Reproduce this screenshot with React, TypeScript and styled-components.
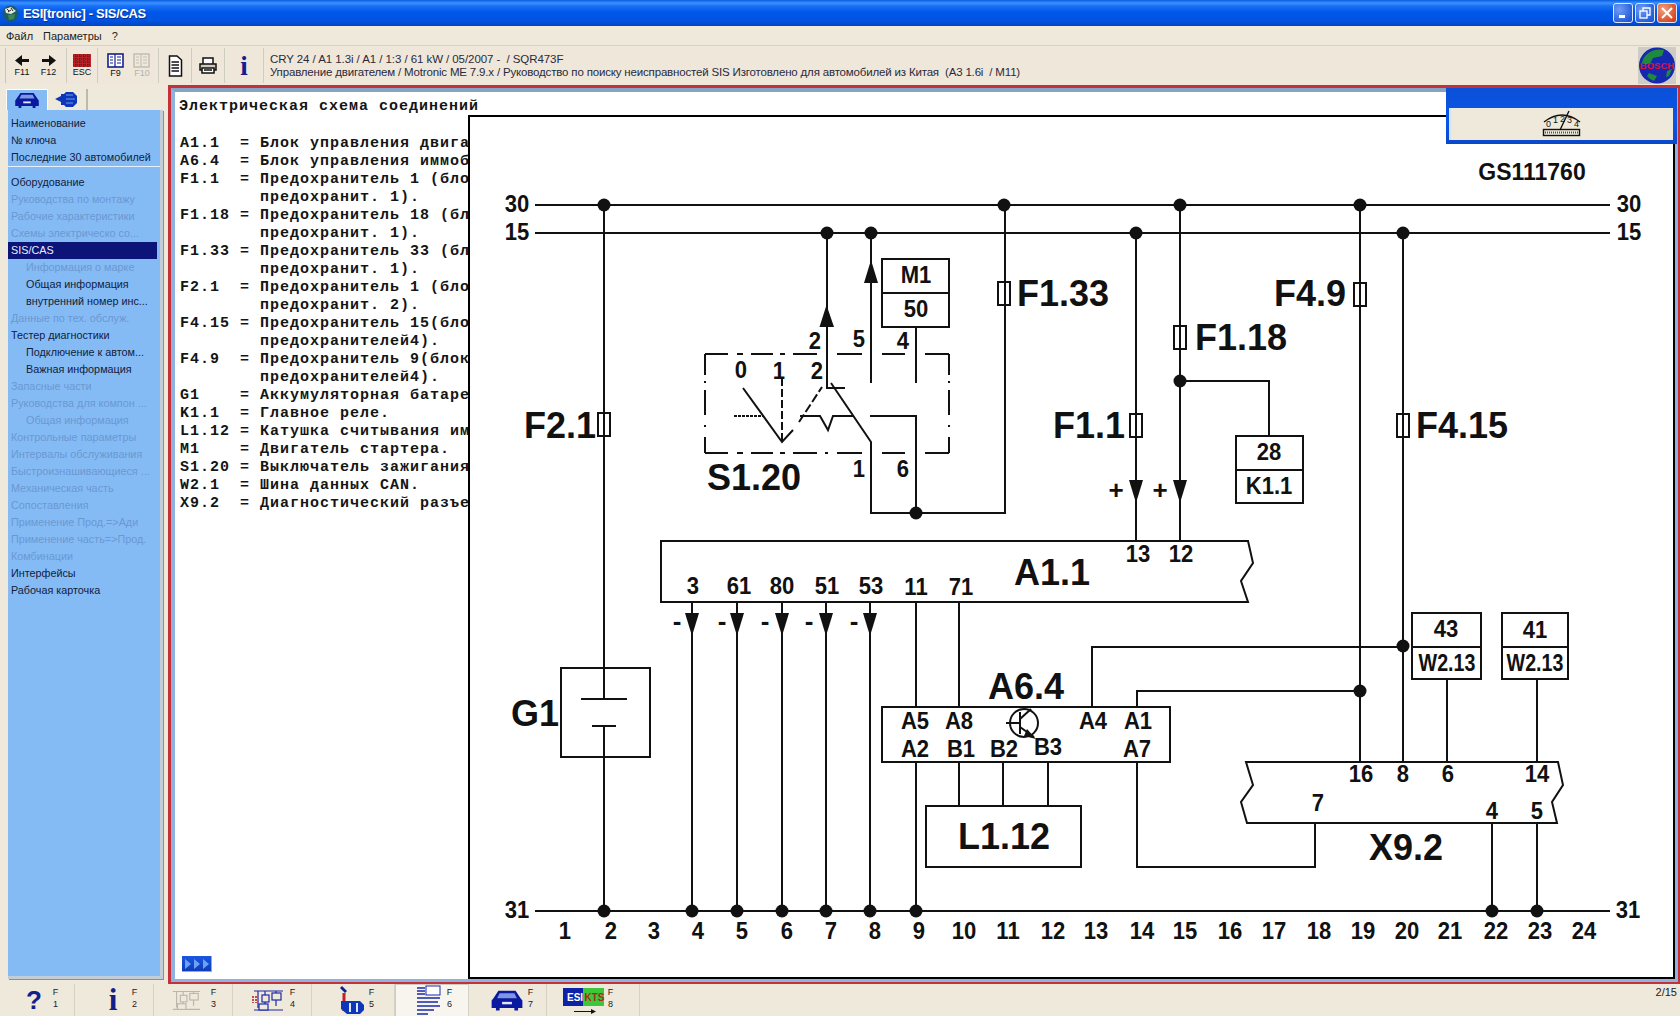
import React from 'react';
import styled, { createGlobalStyle } from 'styled-components';

const Global = createGlobalStyle`
  html, body { margin: 0; padding: 0; background: #efe9db; }
  * { box-sizing: border-box; }
`;

const Page = styled.div`
  position: relative;
  width: 1680px;
  height: 1016px;
  display: flex;
  flex-direction: column;
  overflow: hidden;
  background: #efe9db;
  font-family: "Liberation Sans", Arial, sans-serif;
  color: #14142c;
`;

/* ---------- title bar ---------- */
const TitleBar = styled.div`
  height: 26px;
  flex: none;
  display: flex;
  align-items: center;
  padding: 0 3px 0 2px;
  background: linear-gradient(180deg, #0b5ce0 0, #3a93ff 3px, #1a70f5 6px, #0058e8 12px, #0054e3 20px, #0048c8 25px, #0a3fb0 26px);
`;
const AppIcon = styled.svg`
  width: 17px;
  height: 17px;
  flex: none;
`;
const TitleText = styled.span`
  margin-left: 4px;
  font-size: 13px;
  font-weight: bold;
  letter-spacing: -0.3px;
  color: #fff;
  text-shadow: 1px 1px 0 #0a2f90;
`;
const WinButtons = styled.div`
  margin-left: auto;
  display: flex;
  gap: 2px;
`;
const WinButton = styled.div<{ $close?: boolean }>`
  width: 20px;
  height: 20px;
  border: 1px solid #dfe8fb;
  border-radius: 3px;
  display: flex;
  align-items: center;
  justify-content: center;
  background: ${(p) =>
    p.$close
      ? 'radial-gradient(circle at 30% 30%, #f0a080, #d8502c 70%, #c03a1a)'
      : 'radial-gradient(circle at 30% 30%, #6f9cf5, #2a62dc 70%, #1c4cc4)'};
`;

/* ---------- menu ---------- */
const MenuBar = styled.div`
  height: 20px;
  flex: none;
  display: flex;
  align-items: center;
  padding-left: 6px;
  gap: 10px;
  font-size: 11px;
  background: #efe9db;
  border-bottom: 1px solid #d3d3c4;
  box-shadow: 0 1px 0 #fbfaf5;
`;
const MenuItem = styled.span`
  color: #222;
`;

/* ---------- tool bar ---------- */
const ToolBar = styled.div`
  height: 39px;
  flex: none;
  display: flex;
  align-items: stretch;
  padding: 2px 4px 2px 5px;
  background: #efe7da;
`;
const Grip = styled.div`
  width: 4px;
  border-left: 1px solid #c9c6b6;
`;
const ToolCell = styled.div<{ $w: number; $sep?: boolean }>`
  width: ${(p) => p.$w}px;
  flex: none;
  display: flex;
  flex-direction: column;
  align-items: center;
  justify-content: center;
  gap: 0;
  border-left: ${(p) => (p.$sep ? '1px solid #cfcdbf' : '0')};
`;
const ToolKey = styled.span<{ $off?: boolean }>`
  font-size: 9px;
  line-height: 10px;
  color: ${(p) => (p.$off ? '#b4b2a6' : '#111')};
`;
const InfoIcon = styled.span`
  font-family: "Liberation Serif", serif;
  font-weight: bold;
  font-size: 27px;
  line-height: 28px;
  color: #12208c;
`;
const InfoBlock = styled.div`
  flex: 1;
  border-left: 1px solid #cfcdbf;
  padding: 5px 0 0 6px;
  font-size: 11.5px;
  line-height: 13px;
  color: #2a2a3c;
  white-space: pre;
`;
const InfoLine = styled.div<{ $sp: number }>`
  letter-spacing: ${(p) => p.$sp}px;
`;
const Globe = styled.svg`
  width: 38px;
  height: 37px;
  flex: none;
  align-self: center;
  background: #cfccc8;
`;

/* ---------- work area ---------- */
const Workspace = styled.div`
  height: 899px;
  flex: none;
  display: flex;
`;
const Sidebar = styled.aside`
  width: 168px;
  flex: none;
  padding: 4px 0 0 6px;
  display: flex;
  flex-direction: column;
`;
const Tabs = styled.div`
  height: 21px;
  flex: none;
  display: flex;
`;
const Tab = styled.div<{ $active?: boolean }>`
  width: ${(p) => (p.$active ? 42 : 40)}px;
  display: flex;
  align-items: center;
  justify-content: center;
  background: ${(p) => (p.$active ? '#85bbf5' : 'transparent')};
  border-right: ${(p) => (p.$active ? '1px solid #fff' : '2px solid #bdbaa8')};
  border-top: ${(p) => (p.$active ? '1px solid #fff' : '0')};
  border-left: ${(p) => (p.$active ? '1px solid #fff' : '0')};
`;
const NavPanel = styled.nav`
  margin-left: 2px;
  width: 155px;
  height: 869px;
  flex: none;
  padding-top: 5px;
  background: #85bbf5;
  border-right: 3px solid #c3cdd8;
  border-bottom: 3px solid #c3cdd8;
  box-shadow: 1px 1px 0 #8f8f86;
  display: flex;
  flex-direction: column;
`;
const NavRow = styled.div<{ $indent?: boolean; $state?: 'off' | 'sel' }>`
  height: 17px;
  flex: none;
  margin-right: 3px;
  line-height: 17px;
  font-size: 10.8px;
  white-space: nowrap;
  overflow: hidden;
  padding-left: ${(p) => (p.$indent ? 18 : 3)}px;
  color: ${(p) => (p.$state === 'off' ? '#6a98d2' : p.$state === 'sel' ? '#e8ecff' : '#12203c')};
  background: ${(p) => (p.$state === 'sel' ? '#0c1478' : 'transparent')};
`;
const NavRule = styled.div`
  height: 1px;
  flex: none;
  margin-bottom: 7px;
  background: #e6f1ff;
`;

const Frame = styled.main`
  flex: 1;
  min-width: 0;
  border: 3px solid #c63038;
  border-bottom-width: 2px;
  border-right-width: 2px;
  display: flex;
`;
const FrameInner = styled.div`
  flex: 1;
  min-width: 0;
  border: 4px solid #8fb2de;
  border-top-color: #86a4c2;
  border-bottom-width: 3px;
  border-right-width: 3px;
  background: #fff;
  display: flex;
  flex-direction: column;
`;
const MonoStyle = `
  font-family: "Liberation Mono", "Courier New", monospace;
  font-weight: bold;
  font-size: 15px;
  letter-spacing: 1px;
  line-height: 18px;
  color: #151515;
  white-space: pre;
`;
const DocTitle = styled.div`
  ${MonoStyle}
  height: 23px;
  flex: none;
  padding: 6px 0 0 4px;
`;
const DocBody = styled.div`
  flex: 1;
  min-height: 0;
  display: flex;
`;
const Legend = styled.div`
  width: 293px;
  flex: none;
  display: flex;
  flex-direction: column;
  overflow: hidden;
  padding: 20px 0 7px 5px;
`;
const LegendText = styled.div`
  ${MonoStyle}
`;
const NextButton = styled.div`
  margin-top: auto;
  margin-left: 2px;
  width: 30px;
  height: 16px;
  flex: none;
  display: flex;
  align-items: center;
  justify-content: center;
  background: linear-gradient(180deg, #1a58e0, #0e3cb8);
  border-right: 1px solid #9ab;
  border-bottom: 1px solid #9ab;
`;
const DiagramFrame = styled.div`
  flex: 1;
  min-width: 0;
  border: 2px solid #000;
  display: flex;
`;
const DiagramSvg = styled.svg`
  display: block;
  width: 1203px;
  height: 860px;
`;
const DLabel = styled.text<{ $size: number; $anchor?: string }>`
  font-family: "Liberation Sans", Arial, sans-serif;
  font-weight: bold;
  font-size: ${(p) => p.$size}px;
  text-anchor: ${(p) => p.$anchor || 'middle'};
  dominant-baseline: central;
  fill: #111;
`;

/* ---------- floating gauge window ---------- */
const FloatWindow = styled.div`
  position: absolute;
  left: 1446px;
  top: 88px;
  width: 231px;
  height: 56px;
  display: flex;
  flex-direction: column;
  background: linear-gradient(180deg, #0a50d8, #0a56e6 60%, #0b48c8);
  padding: 20px 4px 4px 3px;
`;
const FloatBody = styled.div`
  flex: 1;
  background: #efe9db;
  border-left: 2px solid #d6e4fa;
  display: flex;
  align-items: center;
  justify-content: center;
`;

/* ---------- bottom bar ---------- */
const BottomBar = styled.footer`
  height: 32px;
  flex: none;
  display: flex;
  align-items: stretch;
  background: #efe9db;
`;
const FnButton = styled.div<{ $w: number; $active?: boolean; $pad: number; $gap?: number }>`
  width: ${(p) => p.$w}px;
  flex: none;
  display: flex;
  align-items: center;
  padding-left: ${(p) => p.$pad}px;
  gap: ${(p) => p.$gap ?? 3}px;
  border-right: 1px solid #d5d2c2;
  background: ${(p) => (p.$active ? '#f7f5ee' : 'transparent')};
  box-shadow: ${(p) => (p.$active ? 'inset 0 1px 0 #cfcdbf, inset 1px 0 0 #cfcdbf' : 'none')};
`;
const FnSlot = styled.div<{ $w: number }>`
  width: ${(p) => p.$w}px;
  height: 32px;
  flex: none;
  display: flex;
  align-items: center;
  justify-content: center;
`;
const HelpGlyph = styled.span<{ $serif?: boolean }>`
  font-family: ${(p) => (p.$serif ? '"Liberation Serif", serif' : '"Liberation Sans", sans-serif')};
  font-weight: bold;
  font-size: ${(p) => (p.$serif ? 31 : 26)}px;
  line-height: 32px;
  color: #12208c;
`;
const FnKey = styled.div`
  width: 9px;
  flex: none;
  font-size: 9px;
  line-height: 12px;
  color: #222;
  text-align: center;
  align-self: flex-start;
  margin-top: 2px;
`;
const Pager = styled.div`
  margin-left: auto;
  align-self: flex-start;
  padding: 2px 3px 0 0;
  font-size: 11px;
  color: #222;
`;

/* ---------- data ---------- */
type NavItem = { t: string; indent?: boolean; state?: 'off' | 'sel' };
const navTop: NavItem[] = [{ t: 'Наименование' }, { t: '№ ключа' }, { t: 'Последние 30 автомобилей' }];
const navMain: NavItem[] = [
  { t: 'Оборудование' },
  { t: 'Руководства по монтажу', state: 'off' },
  { t: 'Рабочие характеристики', state: 'off' },
  { t: 'Схемы электрическо со...', state: 'off' },
  { t: 'SIS/CAS', state: 'sel' },
  { t: 'Информация о марке', indent: true, state: 'off' },
  { t: 'Общая информация', indent: true },
  { t: 'внутренний номер инс...', indent: true },
  { t: 'Данные по тех. обслуж.', state: 'off' },
  { t: 'Тестер диагностики' },
  { t: 'Подключение к автом...', indent: true },
  { t: 'Важная информация', indent: true },
  { t: 'Запасные части', state: 'off' },
  { t: 'Руководства для компон ...', state: 'off' },
  { t: 'Общая информация', indent: true, state: 'off' },
  { t: 'Контрольные параметры', state: 'off' },
  { t: 'Интервалы обслуживания', state: 'off' },
  { t: 'Быстроизнашивающиеся ...', state: 'off' },
  { t: 'Механическая часть', state: 'off' },
  { t: 'Сопоставления', state: 'off' },
  { t: 'Применение Прод.=>Ади', state: 'off' },
  { t: 'Применение часть=>Прод.', state: 'off' },
  { t: 'Комбинации', state: 'off' },
  { t: 'Интерфейсы' },
  { t: 'Рабочая карточка' },
];

const legend = `A1.1  = Блок управления двига
A6.4  = Блок управления иммоб
F1.1  = Предохранитель 1 (бло
        предохранит. 1).
F1.18 = Предохранитель 18 (бл
        предохранит. 1).
F1.33 = Предохранитель 33 (бл
        предохранит. 1).
F2.1  = Предохранитель 1 (бло
        предохранит. 2).
F4.15 = Предохранитель 15(бло
        предохранителей4).
F4.9  = Предохранитель 9(блок
        предохранителей4).
G1    = Аккумуляторная батаре
K1.1  = Главное реле.
L1.12 = Катушка считывания им
M1    = Двигатель стартера.
S1.20 = Выключатель зажигания
W2.1  = Шина данных CAN.
X9.2  = Диагностический разъе`;

const wires = [
  'M535 205H1610', 'M535 233H1610', 'M535 911H1610',
  'M604 205V699', 'M604 726V911', 'M581 699H627', 'M592 726H616',
  'M827 233V388H845', 'M871 233V383', 'M916 327V383',
  'M831 383L871 442V513H1005V205',
  'M743 388L782 442L793 430',
  'M800 416H820L828 430L833 416H853', 'M870 416H916V513',
  'M692 602V911', 'M737 602V911', 'M782 602V911', 'M826 602V911', 'M870 602V911',
  'M916 602V707', 'M916 762V911', 'M959 602V707', 'M959 762V806', 'M1003 762V806', 'M1048 762V806',
  'M1136 233V541', 'M1180 205V541', 'M1180 381H1269V436',
  'M1360 205V762', 'M1403 233V762',
  'M1092 707V647H1403', 'M1137 707V691H1360', 'M1137 762V867H1315V823',
  'M1447 679V762', 'M1537 679V762', 'M1492 823V911', 'M1537 823V911',
  'M661 541H1248L1253 563L1241 581L1248 602H661Z',
  'M1246 762H1558L1563 785L1552 802L1557 823H1247L1241 802L1253 785Z',
];
const switchBox = [
  'M705 354H728M737 354H743M751 354H773M780 354H785M793 354H817M837 354H862M882 354H905M925 354H949',
  'M705 453H728M737 453H743M751 453H773M780 453H785M793 453H817M825 453H828M837 453H862M882 453H905M925 453H949',
  'M705 354V375M705 381V383M705 390V415M705 425V427M705 437V453',
  'M949 354V375M949 381V383M949 390V415M949 425V427M949 437V453',
].join('');
const boxes: [number, number, number, number][] = [
  [561, 668, 89, 89], [882, 259, 67, 68], [1236, 436, 67, 67], [882, 707, 288, 55], [926, 806, 155, 61],
  [1412, 613, 69, 66], [1502, 613, 66, 66],
];
const dividers = ['M882 293H949', 'M1236 470H1303', 'M1412 647H1481', 'M1502 647H1568'];
const nodes: [number, number][] = [
  [604, 205], [1004, 205], [1180, 205], [1360, 205], [827, 233], [871, 233], [1136, 233], [1403, 233],
  [916, 513], [1180, 381], [1403, 646], [1360, 691],
  [604, 911], [692, 911], [737, 911], [782, 911], [826, 911], [870, 911], [916, 911], [1492, 911], [1537, 911],
];
const fuses: [number, number][] = [[604, 413], [1004, 282], [1180, 326], [1136, 414], [1360, 283], [1403, 414]];
const downArrows: [number, number][] = [
  [692, 613], [737, 613], [782, 613], [826, 613], [870, 613], [1136, 480], [1180, 480],
];
const bigLabels: [string, number, number, string?][] = [
  ['F2.1', 596, 425, 'end'], ['F1.33', 1017, 293, 'start'], ['F1.18', 1195, 337, 'start'], ['F1.1', 1125, 425, 'end'],
  ['F4.9', 1346, 293, 'end'], ['F4.15', 1416, 425, 'start'], ['S1.20', 754, 477], ['A1.1', 1052, 572],
  ['A6.4', 1026, 686], ['L1.12', 1004, 836], ['X9.2', 1406, 847], ['G1', 535, 713],
];
const smallLabels: [string, number, number][] = [
  ['30', 517, 204], ['15', 517, 232], ['31', 517, 910], ['30', 1629, 204], ['15', 1629, 232], ['31', 1628, 910],
  ['0', 741, 370], ['1', 779, 371], ['2', 817, 371], ['2', 815, 341], ['5', 859, 339], ['4', 903, 341], ['1', 859, 469], ['6', 903, 469],
  ['M1', 916, 275], ['50', 916, 309], ['28', 1269, 452], ['K1.1', 1269, 486],
  ['13', 1138, 554], ['12', 1181, 554],
  ['3', 693, 586], ['61', 739, 586], ['80', 782, 586], ['51', 827, 586], ['53', 871, 586], ['11', 916, 587], ['71', 961, 587],
  ['A5', 915, 721], ['A8', 959, 721], ['A4', 1093, 721], ['A1', 1138, 721],
  ['A2', 915, 749], ['B1', 961, 749], ['B2', 1004, 749], ['B3', 1048, 747], ['A7', 1137, 749],
  ['43', 1446, 629], ['41', 1535, 630],
  ['16', 1361, 774], ['8', 1403, 774], ['6', 1448, 774], ['14', 1537, 774], ['7', 1318, 803], ['4', 1492, 811], ['5', 1537, 811],
];
const wideLabels: [string, number, number][] = [['W2.13', 1447, 663], ['W2.13', 1535, 663]];
const signs: [string, number, number][] = [
  ['-', 677, 621], ['-', 722, 621], ['-', 765, 621], ['-', 809, 621], ['-', 854, 621], ['+', 1116, 490], ['+', 1160, 490],
];
const rowX = [565, 611, 654, 698, 742, 787, 831, 875, 919, 964, 1008, 1053, 1096, 1142, 1185, 1230, 1274, 1319, 1363, 1407, 1450, 1496, 1540, 1584];

/* ---------- drawn icons ---------- */
const ArrowIcon = ({ right }: { right?: boolean }) => (
  <svg width="16" height="13" viewBox="0 0 16 13">
    <path d={right ? 'M1 5H8V1L15 6.5L8 12V8H1Z' : 'M15 5H8V1L1 6.5L8 12V8H15Z'} fill="#111" />
  </svg>
);
const EscIcon = () => (
  <svg width="18" height="13" viewBox="0 0 18 13">
    <rect width="18" height="13" fill="#c02028" />
    <path d="M0 2H18M0 5H18M0 8H18M0 11H18M3 0V13M7 0V13M11 0V13M15 0V13" stroke="#5a1010" strokeWidth="1" strokeDasharray="1 1" />
  </svg>
);
const PanelIcon = ({ off }: { off?: boolean }) => (
  <svg width="18" height="15" viewBox="0 0 18 15" fill="none" stroke={off ? '#c3c1b6' : '#14208c'} strokeWidth="1.6">
    <rect x="1" y="1" width="15" height="13" fill={off ? 'none' : '#fff'} />
    <path d="M8 1V14M3 4H6M3 7H6M3 10H6M10 4H14M10 7H14M10 10H14" strokeWidth="1.2" />
  </svg>
);
const DocIcon = () => (
  <svg width="15" height="22" viewBox="0 0 15 22" fill="#fff" stroke="#111" strokeWidth="1.5">
    <path d="M1.5 1H9L13.5 5V21H1.5Z" />
    <path d="M3.5 7H11M3.5 10H11M3.5 13H11M3.5 16H11" fill="none" />
  </svg>
);
const PrintIcon = () => (
  <svg width="20" height="18" viewBox="0 0 20 18" stroke="#111" strokeWidth="1.5" fill="#cfcabd">
    <path d="M5 7V1H15V7" fill="#fff" />
    <path d="M2 7H18V13H2Z" />
    <path d="M4 11H16V16H4Z" fill="#fff" />
    <path d="M6 13H14" />
  </svg>
);
const CarIcon = ({ w = 26, h = 17 }: { w?: number; h?: number }) => (
  <svg width={w} height={h} viewBox="0 0 26 17">
    <path d="M6 1H20L24 7L25.5 9V15H22V17H19V15H7V17H4V15H.5V9L2 7Z" fill="#0a1aa0" />
    <path d="M7 3H19L21 7H5Z" fill="#7f97e0" />
    <path d="M9 10H17V12H9Z" fill="#dfe4ff" />
  </svg>
);
const EngineIcon = () => (
  <svg width="24" height="15" viewBox="0 0 24 15">
    <path d="M0 7L6 4V2H9L11 0H18L22 4V11L18 15H11L9 13H6V10Z" fill="#0e36b8" />
    <path d="M11 3H18M11 7H20M11 11H18" stroke="#6a9cf0" />
  </svg>
);
const SchemeIcon = ({ grey }: { grey?: boolean }) => {
  const c = grey ? '#b9b7ab' : '#1a2aa8';
  return (
    <svg width="34" height="28" viewBox="0 0 34 28" fill="none" stroke={c} strokeWidth="1.2">
      <path d="M3 5H32M7 5V22M14 5V24M25 5V20M3 24H32" />
      <rect x="11" y="9" width="7" height="7" fill="#efe9db" />
      <rect x="21" y="7" width="9" height="7" fill="#efe9db" />
      <rect x="8" y="18" width="9" height="6" fill="#efe9db" />
      {!grey && <path d="M2 10V17M5 10V17" stroke="#c02028" strokeWidth="1.6" strokeDasharray="2 1" />}
    </svg>
  );
};
const DiagEngineIcon = () => (
  <svg width="26" height="30" viewBox="0 0 26 30">
    <path d="M4 1L9 6L7 8L2 3Z" fill="#12208c" />
    <path d="M6 8V26" stroke="#c02028" strokeWidth="3" />
    <path d="M3 16H22L26 20V25L22 29H9L3 24Z" fill="#0e36b8" />
    <path d="M12 18V27M19 18V27" stroke="#dfe4ff" strokeWidth="2" />
  </svg>
);
const ReportIcon = () => (
  <svg width="26" height="30" viewBox="0 0 26 30" stroke="#1a2aa8" strokeWidth="1.6">
    <path d="M1 3H9M1 6H9M1 9H9M1 13H24M1 17H22M1 21H24M1 25H18M1 29H12" />
    <rect x="10" y="1" width="14" height="9" fill="#fff" strokeWidth="1" />
  </svg>
);
const TinyMark = styled.text`
  font-family: "Liberation Sans", sans-serif;
  font-weight: bold;
  font-size: 10px;
`;
const EsiKtsIcon = () => (
  <svg width="42" height="28" viewBox="0 0 42 28">
    <rect x="0" y="2" width="20" height="18" fill="#0e22a8" />
    <rect x="20" y="2" width="21" height="18" fill="#3cc838" />
    <TinyMark x="4" y="15" fill="#fff">ESI</TinyMark>
    <TinyMark x="21.5" y="15" fill="#b0281c">KTS</TinyMark>
    <path d="M11 25H28V23L33 25.5L28 28V26H11Z" fill="#111" />
  </svg>
);
const TinyGauge = styled.text`
  font-family: "Liberation Sans", sans-serif;
  font-size: 9px;
  fill: #111;
  stroke: none;
`;
const GaugeIcon = () => (
  <svg width="40" height="28" viewBox="0 0 40 28" fill="none" stroke="#111">
    <path d="M2 12Q20 -2 38 12" strokeWidth="1.4" />
    <path d="M18 20L27 1" strokeWidth="1.4" />
    <rect x="1.5" y="19.5" width="36" height="6" strokeWidth="1.4" />
    <path d="M3 22.5H36" strokeDasharray="1 1" strokeWidth="2" stroke="#555" />
    <TinyGauge x="4" y="17">0</TinyGauge>
    <TinyGauge x="11" y="13">1</TinyGauge>
    <TinyGauge x="18" y="12">2</TinyGauge>
    <TinyGauge x="25" y="13">3</TinyGauge>
    <TinyGauge x="32" y="17">4</TinyGauge>
  </svg>
);
const BoschMark = styled.text`
  font-family: "Liberation Sans", sans-serif;
  font-weight: bold;
  font-size: 9.5px;
  fill: #e0103a;
  text-anchor: middle;
`;

export default function App() {
  return (
    <Page>
      <Global />
      <TitleBar>
        <AppIcon viewBox="0 0 17 17">
          <circle cx="8.5" cy="8.5" r="8" fill="#1e5a6a" />
          <path d="M3 4L9 2L14 6L9 9L4 8Z" fill="#e6ebe0" />
          <path d="M5 4L7 6M9 3L11 6M6 7L9 5" stroke="#223" strokeWidth="1" />
          <path d="M6 10L13 9L12 14L7 15Z" fill="#3b8a4a" />
        </AppIcon>
        <TitleText>ESI[tronic] - SIS/CAS</TitleText>
        <WinButtons>
          <WinButton>
            <svg width="12" height="12" viewBox="0 0 12 12"><rect x="2" y="8" width="6" height="3" fill="#fff" /></svg>
          </WinButton>
          <WinButton>
            <svg width="12" height="12" viewBox="0 0 12 12" fill="none" stroke="#fff" strokeWidth="1.3"><rect x="1" y="4" width="7" height="7" /><path d="M4 4V1H11V8H8" /></svg>
          </WinButton>
          <WinButton $close>
            <svg width="12" height="12" viewBox="0 0 12 12" stroke="#fff" strokeWidth="2"><path d="M1 1L11 11M11 1L1 11" /></svg>
          </WinButton>
        </WinButtons>
      </TitleBar>

      <MenuBar>
        <MenuItem>Файл</MenuItem>
        <MenuItem>Параметры</MenuItem>
        <MenuItem>?</MenuItem>
      </MenuBar>

      <ToolBar>
        <Grip />
        <ToolCell $w={26}><ArrowIcon /><ToolKey>F11</ToolKey></ToolCell>
        <ToolCell $w={27}><ArrowIcon right /><ToolKey>F12</ToolKey></ToolCell>
        <ToolCell $w={4} />
        <ToolCell $w={31} $sep><EscIcon /><ToolKey>ESC</ToolKey></ToolCell>
        <ToolCell $w={36} $sep><PanelIcon /><ToolKey>F9</ToolKey></ToolCell>
        <ToolCell $w={18}><PanelIcon off /><ToolKey $off>F10</ToolKey></ToolCell>
        <ToolCell $w={7} />
        <ToolCell $w={33} $sep><DocIcon /></ToolCell>
        <ToolCell $w={33} $sep><PrintIcon /></ToolCell>
        <ToolCell $w={39} $sep><InfoIcon>i</InfoIcon></ToolCell>
        <InfoBlock>
          <InfoLine $sp={-0.07}>CRY 24 / A1 1.3i / A1 / 1:3 / 61 kW / 05/2007 -  / SQR473F</InfoLine>
          <InfoLine $sp={-0.17}>Управление двигателем / Motronic ME 7.9.x / Руководство по поиску неисправностей SIS Изготовлено для автомобилей из Китая  (A3 1.6i  / M11)</InfoLine>
        </InfoBlock>
        <Globe viewBox="0 0 38 37">
          <circle cx="19" cy="18.5" r="18" fill="#1428b0" />
          <path d="M8 8Q16 1 26 3L24 9L15 11L12 17H4Q4 12 8 8ZM11 26L19 29L16 34Q11 32 9 29ZM29 24L34 22L31 29L28 30Z" fill="#1f8a3c" />
          <BoschMark x="19" y="22">BOSCH</BoschMark>
        </Globe>
      </ToolBar>

      <Workspace>
        <Sidebar>
          <Tabs>
            <Tab $active><CarIcon w={26} h={16} /></Tab>
            <Tab><EngineIcon /></Tab>
          </Tabs>
          <NavPanel>
            {navTop.map((n) => (
              <NavRow key={n.t}>{n.t}</NavRow>
            ))}
            <NavRule />
            {navMain.map((n, i) => (
              <NavRow key={i} $indent={n.indent} $state={n.state}>{n.t}</NavRow>
            ))}
          </NavPanel>
        </Sidebar>

        <Frame>
          <FrameInner>
            <DocTitle>Электрическая схема соединений</DocTitle>
            <DocBody>
              <Legend>
                <LegendText>{legend}</LegendText>
                <NextButton>
                  <svg width="26" height="12" viewBox="0 0 26 12" fill="#6fa0f8">
                    <path d="M1 1L7 6L1 11ZM10 1L16 6L10 11ZM19 1L25 6L19 11Z" />
                  </svg>
                </NextButton>
              </Legend>
              <DiagramFrame>
                <DiagramSvg viewBox="470 117 1203 860">
                  <g fill="none" stroke="#111" strokeWidth="2">
                    {wires.map((d) => <path key={d} d={d} />)}
                    <path d={switchBox} />
                    {boxes.map(([x, y, w, h]) => <rect key={`${x}-${y}`} x={x} y={y} width={w} height={h} />)}
                    {dividers.map((d) => <path key={d} d={d} />)}
                    {fuses.map(([x, y]) => <rect key={`${x}-${y}`} x={x - 6} y={y} width={12} height={23} />)}
                    <path d="M799 422L822 387" strokeDasharray="9 3" />
                    <path d="M782 378V442" strokeDasharray="8 3" />
                    <path d="M734 416H763" strokeDasharray="3 1" />
                    <circle cx="1024" cy="723" r="14" />
                    <path d="M1006 723H1020M1020 712V734M1020 719L1031 709M1020 727L1034 737" />
                  </g>
                  <path d="M1027 729L1036 739L1024 736Z" fill="#111" />
                  <path d="M819.5 327H834L826.5 305ZM864 283H878L871 260Z" fill="#111" />
                  {downArrows.map(([x, y]) => (
                    <path key={`${x}`} d={`M${x - 7} ${y}H${x + 7}L${x} ${y + 23}Z`} fill="#111" />
                  ))}
                  {nodes.map(([x, y]) => <circle key={`${x}-${y}`} cx={x} cy={y} r="6.5" fill="#111" />)}
                  {bigLabels.map(([t, x, y, a]) => (
                    <DLabel key={t} x={x} y={y} $size={36} $anchor={a}>{t}</DLabel>
                  ))}
                  {smallLabels.map(([t, x, y]) => (
                    <DLabel key={`${t}-${x}-${y}`} transform={`translate(${x} ${y}) scale(.92 1)`} $size={24}>{t}</DLabel>
                  ))}
                  {wideLabels.map(([t, x, y]) => (
                    <DLabel key={`${t}-${x}`} transform={`translate(${x} ${y}) scale(.82 1)`} $size={24}>{t}</DLabel>
                  ))}
                  <DLabel x={1532} y={172} $size={23}>GS111760</DLabel>
                  {signs.map(([t, x, y]) => (
                    <DLabel key={`${x}`} x={x} y={y} $size={26}>{t}</DLabel>
                  ))}
                  {rowX.map((x, i) => (
                    <DLabel key={x} transform={`translate(${x} 931) scale(.92 1)`} $size={24}>{i + 1}</DLabel>
                  ))}
                </DiagramSvg>
              </DiagramFrame>
            </DocBody>
          </FrameInner>
        </Frame>
      </Workspace>

      <BottomBar>
        <FnButton $w={75} $pad={20}><FnSlot $w={28}><HelpGlyph>?</HelpGlyph></FnSlot><FnKey>F<br />1</FnKey></FnButton>
        <FnButton $w={79} $pad={24}><FnSlot $w={28}><HelpGlyph $serif>i</HelpGlyph></FnSlot><FnKey>F<br />2</FnKey></FnButton>
        <FnButton $w={79} $pad={16} $gap={7}><FnSlot $w={32}><SchemeIcon grey /></FnSlot><FnKey>F<br />3</FnKey></FnButton>
        <FnButton $w={79} $pad={18}><FnSlot $w={34}><SchemeIcon /></FnSlot><FnKey>F<br />4</FnKey></FnButton>
        <FnButton $w={83} $pad={26}><FnSlot $w={26}><DiagEngineIcon /></FnSlot><FnKey>F<br />5</FnKey></FnButton>
        <FnButton $w={74} $pad={21} $active><FnSlot $w={26}><ReportIcon /></FnSlot><FnKey>F<br />6</FnKey></FnButton>
        <FnButton $w={78} $pad={22}><FnSlot $w={32}><CarIcon w={32} h={22} /></FnSlot><FnKey>F<br />7</FnKey></FnButton>
        <FnButton $w={93} $pad={16} $gap={1}><FnSlot $w={42}><EsiKtsIcon /></FnSlot><FnKey>F<br />8</FnKey></FnButton>
        <Pager>2/15</Pager>
      </BottomBar>

      <FloatWindow>
        <FloatBody><GaugeIcon /></FloatBody>
      </FloatWindow>
    </Page>
  );
}
